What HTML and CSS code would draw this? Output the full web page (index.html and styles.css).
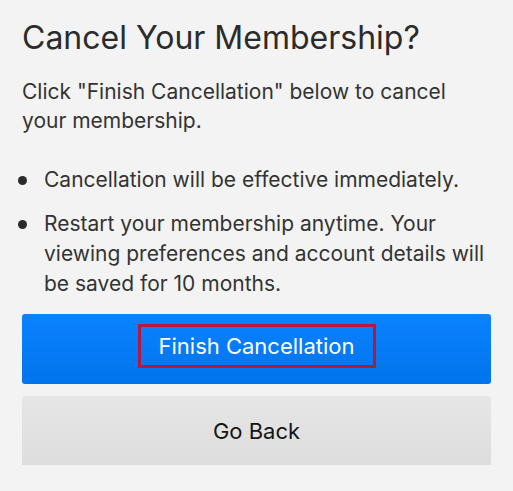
FILE: index.html
```html
<!DOCTYPE html>
<html lang="en">
<head>
<meta charset="utf-8">
<title>Cancel Your Membership?</title>
<link rel="stylesheet" href="styles.css">
</head>
<body>
<main class="page">
  <h1 class="title">Cancel Your Membership?</h1>
  <p class="lead">Click "Finish Cancellation" below to cancel your membership.</p>
  <ul class="points">
    <li>Cancellation will be effective immediately.</li>
    <li>Restart your membership anytime. Your viewing preferences and account details will be saved for 10 months.</li>
  </ul>
  <div class="actions">
    <button class="btn btn-primary"><span class="highlight">Finish Cancellation</span></button>
    <button class="btn btn-secondary">Go Back</button>
  </div>
</main>
</body>
</html>
```
FILE: styles.css
```css
html, body {
  margin: 0;
  background: #f3f3f3;
}
body {
  font-family: Inter, Roboto, "Noto Sans", Arial, sans-serif;
  color: #333;
}
.page {
  padding: 18px 22px 0 22px;
}
.title {
  margin: 0;
  font-size: 32px;
  font-weight: 400;
  line-height: 40px;
  color: #2b2b2b;
}
.lead {
  margin: 19px 0 0 0;
  font-size: 21px;
  line-height: 29px;
  padding-right: 30px;
}
.points {
  list-style: none;
  margin: 30px 0 0 0;
  padding: 0;
  font-size: 21px;
  line-height: 30px;
}
.points li {
  position: relative;
  padding-left: 22px;
}
.points li + li {
  margin-top: 14px;
}
.points li::before {
  content: "";
  position: absolute;
  left: -4px;
  top: 11px;
  width: 9px;
  height: 9px;
  border-radius: 50%;
  background: #2b2b2b;
}
.actions {
  margin-top: 15px;
  display: flex;
  flex-direction: column;
  gap: 12px;
}
.btn {
  width: 100%;
  border: none;
  border-radius: 3px;
  font-family: inherit;
  font-size: 22px;
  display: flex;
  align-items: center;
  justify-content: center;
  padding: 0;
}
.btn-primary {
  height: 70px;
  background: linear-gradient(#0b82ff, #0074ec);
  color: #fff;
}
.highlight {
  border: 3px solid #b8163c;
  padding: 5px 18px;
  line-height: 28px;
  margin-bottom: 6px;
}
.btn-secondary {
  height: 69px;
  background: linear-gradient(#e6e6e6, #dddddd);
  color: #141414;
  box-shadow: 0 1px 0 rgba(0,0,0,0.18);
}
```
